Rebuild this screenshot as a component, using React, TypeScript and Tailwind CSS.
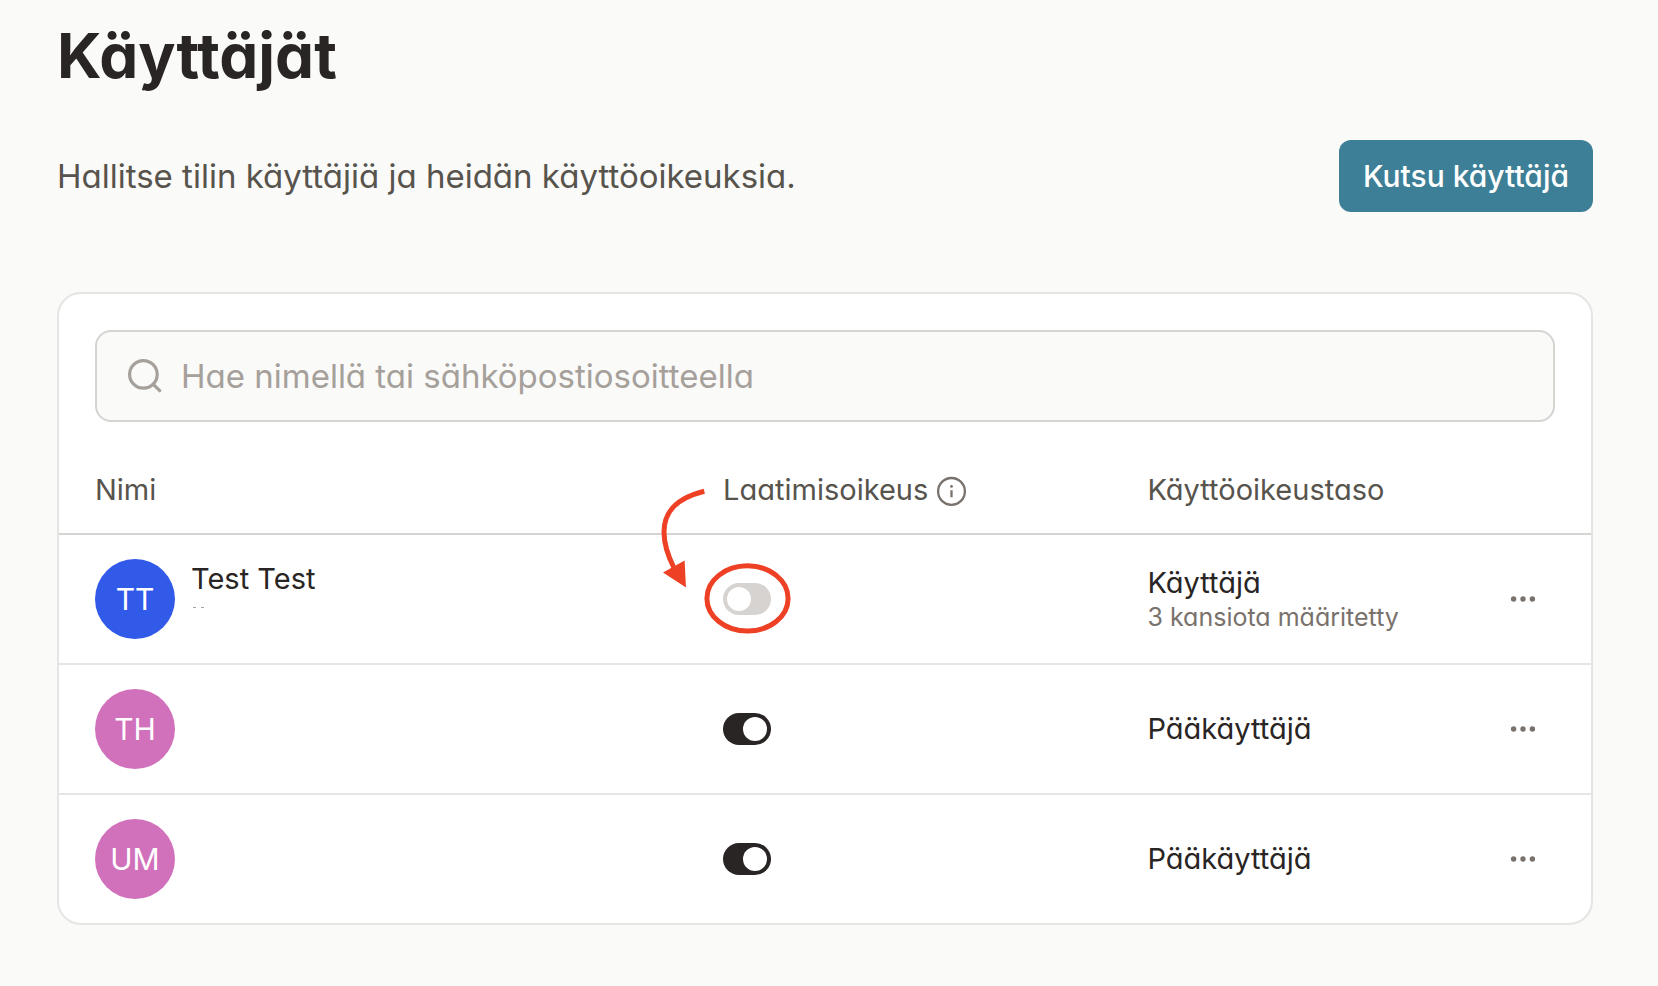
import React, { useState } from 'react';

interface UserRow {
  id: string;
  initials: string;
  color: string;
  name?: string;
  role: string;
  roleInfo?: string;
  canDraft: boolean;
}

const initialUsers: UserRow[] = [
  { id: 'tt', initials: 'TT', color: 'bg-[#325ae8]', name: 'Test Test', role: 'Käyttäjä', roleInfo: '3 kansiota määritetty', canDraft: false },
  { id: 'th', initials: 'TH', color: 'bg-[#d170bb]', role: 'Pääkäyttäjä', canDraft: true },
  { id: 'um', initials: 'UM', color: 'bg-[#d170bb]', role: 'Pääkäyttäjä', canDraft: true },
];

function SearchIcon() {
  return (
    <svg className="w-10 h-10 shrink-0 text-stone-400" viewBox="0 0 40 40" fill="none" stroke="currentColor" strokeWidth="3.2" strokeLinecap="round" aria-hidden="true">
      <circle cx="18.4" cy="18.4" r="13.8" />
      <path d="M28.3 28.3l6.4 6.4" />
    </svg>
  );
}

function InfoIcon() {
  return (
    <svg className="w-8 h-8 text-stone-500" viewBox="0 0 32 32" fill="none" stroke="currentColor" strokeWidth="2.3" aria-hidden="true">
      <circle cx="15.5" cy="17.4" r="13.4" />
      <path d="M15.5 16.2v7" />
      <circle cx="15.5" cy="12.4" r="1.4" fill="currentColor" stroke="none" />
    </svg>
  );
}

function DotsIcon() {
  return (
    <svg className="w-8 h-8" viewBox="0 0 32 32" fill="currentColor" aria-hidden="true">
      <circle cx="6.6" cy="16" r="2.7" />
      <circle cx="16" cy="16" r="2.7" />
      <circle cx="25.4" cy="16" r="2.7" />
    </svg>
  );
}

// Arrow and ring that point out the first switch
function SwitchHint() {
  return (
    <svg className="absolute -left-17 -top-26 w-[144px] h-[160px] max-w-none pointer-events-none" viewBox="0 0 144 160" fill="none" aria-hidden="true">
      <path d="M49.3 12.2C22 19 9 32 9 53C9 65 13 77 19 89" stroke="#ed4025" strokeWidth="5" />
      <path d="M31 108.6L8 93.4L29.6 81.4Z" fill="#ed4025" />
      <ellipse cx="92.5" cy="119.4" rx="40.6" ry="32.6" stroke="#ed4025" strokeWidth="5" />
    </svg>
  );
}

export default function App() {
  const [users, setUsers] = useState(initialUsers);
  const [query, setQuery] = useState('');

  const toggleDraft = (id: string) => {
    setUsers(users.map((u) => (u.id === id ? { ...u, canDraft: !u.canDraft } : u)));
  };

  return (
    <main className="min-h-screen bg-[#fafaf9] pl-[57px] pr-[65px] pt-5 pb-12 font-['Inter',sans-serif] [font-feature-settings:'cv11'] text-stone-800">
      <h1 className="text-[62px] leading-[72px] font-bold">Käyttäjät</h1>

      <div className="mt-12 flex items-center justify-between">
        <p className="text-[33px] leading-10 text-stone-600">Hallitse tilin käyttäjiä ja heidän käyttöoikeuksia.</p>
        <button type="button" className="h-18 px-6 rounded-xl bg-[#3d7f96] text-white text-[30px] leading-9 font-medium">
          Kutsu käyttäjä
        </button>
      </div>

      <section className="mt-20 bg-white border-2 border-[#e5e5e4] rounded-3xl overflow-hidden">
        <div className="px-9 pt-9 pb-6">
          <label className="h-23 px-7 flex items-center gap-4 bg-[#fafaf9] border-2 border-stone-300 rounded-2xl">
            <SearchIcon />
            <input
              type="text"
              value={query}
              onChange={(e) => setQuery(e.target.value)}
              placeholder="Hae nimellä tai sähköpostiosoitteella"
              aria-label="Hae nimellä tai sähköpostiosoitteella"
              className="flex-1 min-w-0 bg-transparent outline-none text-[33px] leading-10 placeholder:text-stone-400"
            />
          </label>
        </div>

        <table className="w-full table-fixed text-left text-[29px] leading-9">
          <colgroup>
            <col className="w-[41%]" />
            <col className="w-[27.7%]" />
            <col />
            <col className="w-34" />
          </colgroup>
          <thead>
            <tr className="h-[88px] border-b-2 border-stone-300 text-stone-600">
              <th className="pl-9 font-normal">Nimi</th>
              <th className="pl-9 font-normal">
                <span className="flex items-center gap-2">
                  Laatimisoikeus
                  <InfoIcon />
                </span>
              </th>
              <th className="pl-9 font-normal">Käyttöoikeustaso</th>
              <th aria-label="Toiminnot" />
            </tr>
          </thead>
          <tbody>
            {users.map((user) => (
              <tr key={user.id} className="h-[130px] border-b-2 border-[#e5e5e4] last:h-[129px] last:border-b-0">
                <td className="pl-9">
                  <div className="flex items-center gap-4">
                    <div className={`w-20 h-20 shrink-0 rounded-full flex items-center justify-center text-white text-[30px] ${user.color}`}>
                      {user.initials}
                    </div>
                    {user.name && (
                      <div>
                        <p>{user.name}</p>
                        <svg className="w-10 h-10" viewBox="0 0 40 40" stroke="#a8a29e" aria-hidden="true">
                          <path d="M2 10.5h3M10 10.5h3" />
                        </svg>
                      </div>
                    )}
                  </div>
                </td>
                <td className="pl-9">
                  <div className="relative w-12 h-8">
                    <button
                      type="button"
                      role="switch"
                      aria-checked={user.canDraft}
                      aria-label="Laatimisoikeus"
                      onClick={() => toggleDraft(user.id)}
                      className={`w-12 h-8 p-1 flex rounded-full ${user.canDraft ? 'justify-end bg-stone-800' : 'justify-start bg-stone-300'}`}
                    >
                      <span className="w-6 h-6 rounded-full bg-white" />
                    </button>
                    {user.id === 'tt' && <SwitchHint />}
                  </div>
                </td>
                <td className="pl-9">
                  <p>{user.role}</p>
                  {user.roleInfo && <p className="text-[25px] leading-8 text-stone-500">{user.roleInfo}</p>}
                </td>
                <td className="pl-9">
                  <button type="button" aria-label="Lisää toimintoja" className="w-16 h-16 flex items-center justify-center rounded-lg text-stone-500">
                    <DotsIcon />
                  </button>
                </td>
              </tr>
            ))}
          </tbody>
        </table>
      </section>
    </main>
  );
}
